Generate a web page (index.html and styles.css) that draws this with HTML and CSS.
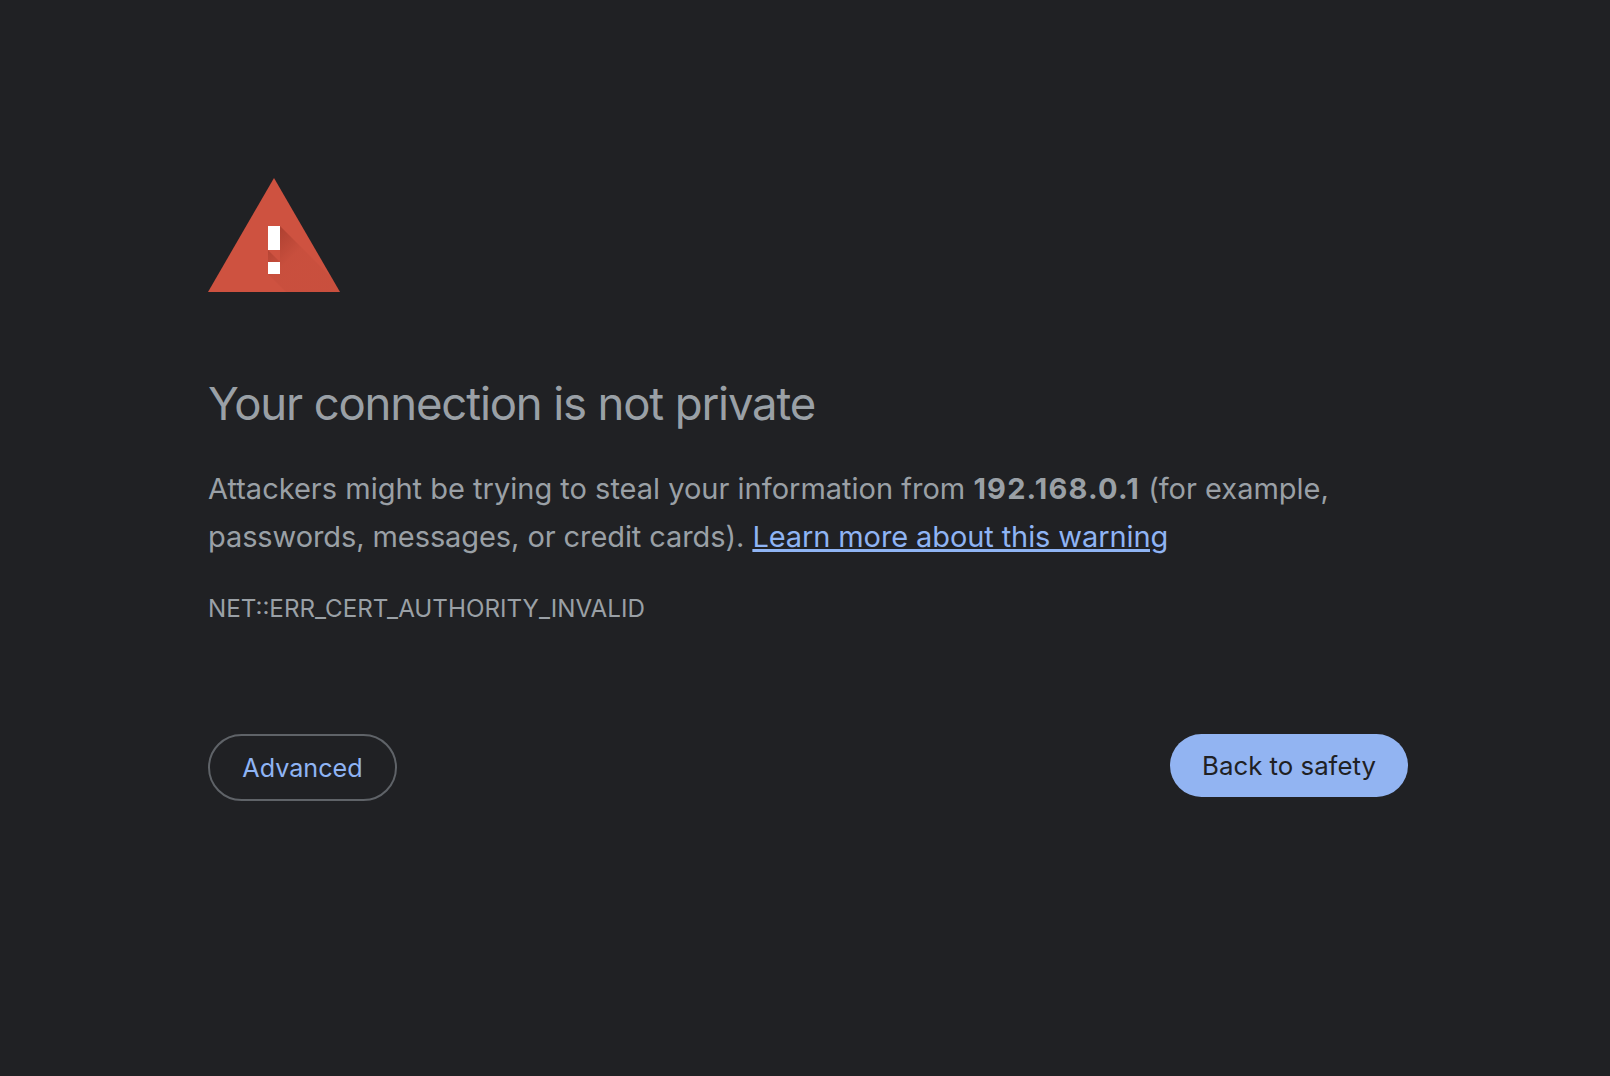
FILE: index.html
```html
<!DOCTYPE html>
<html lang="en">
<head>
<meta charset="utf-8">
<title>Privacy error</title>
<link rel="stylesheet" href="styles.css">
</head>
<body>
<main class="page">
  <svg class="icon" width="132" height="114" viewBox="0 0 132 114" aria-hidden="true">
    <defs>
      <linearGradient id="shade" gradientUnits="userSpaceOnUse" x1="62" y1="62" x2="90" y2="90">
        <stop offset="0" stop-color="#7a2418" stop-opacity=".36"/>
        <stop offset=".7" stop-color="#7a2418" stop-opacity=".07"/>
        <stop offset="1" stop-color="#7a2418" stop-opacity=".06"/>
      </linearGradient>
    </defs>
    <polygon points="66,0 132,114 0,114" fill="#ce5240"/>
    <polygon points="72,48 124,100 132,114 78,114 60,96 60,72 72,84" fill="url(#shade)"/>
    <rect x="60" y="48" width="12" height="24" fill="#fff"/>
    <rect x="60" y="84" width="12" height="12" fill="#fff"/>
  </svg>
  <h1 class="title">Your connection is not private</h1>
  <p class="message">Attackers might be trying to steal your information from <strong>192.168.0.1</strong> (for example, <span class="tight">passwords, messages, or credit cards).</span> <a class="link" href="#">Learn more about this warning</a></p>
  <p class="code">NET::ERR_CERT_AUTHORITY_INVALID</p>
  <div class="actions">
    <button class="btn btn-outline">Advanced</button>
    <button class="btn btn-primary">Back to safety</button>
  </div>
</main>
</body>
</html>
```
FILE: styles.css
```css
* { box-sizing: border-box; }
html, body { margin: 0; height: 100%; }
body {
  background: #202124;
  color: #9aa0a6;
  font-family: Inter, "Liberation Sans", sans-serif;
}
.page {
  width: 1200px;
  margin-left: 208px;
  padding-top: 178px;
}
.icon { display: block; }
.title {
  margin: 82px 0 0;
  font-size: 45.5px;
  font-weight: 400;
  line-height: 60px;
  letter-spacing: -1.17px;
  color: #9aa0a6;
}
.message {
  margin: 31px 0 0;
  max-width: 1140px;
  font-size: 29px;
  line-height: 48px;
}
.message strong { font-weight: 700; letter-spacing: 1.2px; }
.tight { letter-spacing: -0.09px; }
.link {
  color: #8fb4f4;
  letter-spacing: -0.1px;
  text-decoration-thickness: 2.5px;
  text-underline-offset: 2px;
}
.code {
  margin: 30px 0 0;
  font-size: 24.2px;
  line-height: 36px;
}
.actions {
  display: flex;
  justify-content: space-between;
  align-items: flex-start;
  margin-top: 107px;
}
.btn {
  font: inherit;
  font-size: 25.2px;
  border-radius: 34px;
}
.btn-outline {
  width: 189px;
  height: 67px;
  background: transparent;
  color: #8fb4f4;
  border: 2px solid #5f6368;
}
.btn-primary {
  width: 238px;
  height: 63px;
  font-size: 25.8px;
  background: #92b4f2;
  color: #202124;
  border: 0;
}
```
